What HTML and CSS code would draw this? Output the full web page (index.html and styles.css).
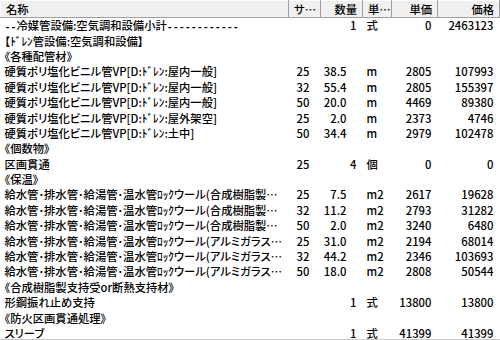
FILE: index.html
```html
<!DOCTYPE html>
<html lang="ja">
<head>
<meta charset="utf-8">
<title>明細一覧</title>
<link rel="stylesheet" href="styles.css">
</head>
<body>
<div class="listview">
<table class="grid">
<colgroup>
<col class="c-name"><col class="c-size"><col class="c-qty"><col class="c-unit"><col class="c-price"><col class="c-amount">
</colgroup>
<thead>
<tr>
<th class="h-left">名称</th>
<th class="h-left">サ…</th>
<th class="h-right">数量</th>
<th class="h-left">単…</th>
<th class="h-right">単価</th>
<th class="h-right">価格</th>
</tr>
</thead>
<tbody>
<tr><td class="name"><span class="rule">--</span>冷媒管設備:空気調和設備小計<span class="rule">------------</span></td><td></td><td class="num">1</td><td class="unit">式</td><td class="num">0</td><td class="num">2463123</td></tr>
<tr><td class="name">【ﾄﾞﾚﾝ管設備:空気調和設備】</td><td></td><td></td><td></td><td></td><td></td></tr>
<tr><td class="name">《各種配管材》</td><td></td><td></td><td></td><td></td><td></td></tr>
<tr><td class="name">硬質ポリ塩化ビニル管VP[D:ﾄﾞﾚﾝ:屋内一般]</td><td class="size">25</td><td class="num dec">38.5</td><td class="unit">m</td><td class="num">2805</td><td class="num">107993</td></tr>
<tr><td class="name">硬質ポリ塩化ビニル管VP[D:ﾄﾞﾚﾝ:屋内一般]</td><td class="size">32</td><td class="num dec">55.4</td><td class="unit">m</td><td class="num">2805</td><td class="num">155397</td></tr>
<tr><td class="name">硬質ポリ塩化ビニル管VP[D:ﾄﾞﾚﾝ:屋内一般]</td><td class="size">50</td><td class="num dec">20.0</td><td class="unit">m</td><td class="num">4469</td><td class="num">89380</td></tr>
<tr><td class="name">硬質ポリ塩化ビニル管VP[D:ﾄﾞﾚﾝ:屋外架空]</td><td class="size">25</td><td class="num dec">2.0</td><td class="unit">m</td><td class="num">2373</td><td class="num">4746</td></tr>
<tr><td class="name">硬質ポリ塩化ビニル管VP[D:ﾄﾞﾚﾝ:土中]</td><td class="size">50</td><td class="num dec">34.4</td><td class="unit">m</td><td class="num">2979</td><td class="num">102478</td></tr>
<tr><td class="name">《個数物》</td><td></td><td></td><td></td><td></td><td></td></tr>
<tr><td class="name">区画貫通</td><td class="size">25</td><td class="num">4</td><td class="unit">個</td><td class="num">0</td><td class="num">0</td></tr>
<tr><td class="name">《保温》</td><td></td><td></td><td></td><td></td><td></td></tr>
<tr><td class="name">給水管･排水管･給湯管･温水管ﾛｯｸウール(合成樹脂製…</td><td class="size">25</td><td class="num dec">7.5</td><td class="unit">m2</td><td class="num">2617</td><td class="num">19628</td></tr>
<tr><td class="name">給水管･排水管･給湯管･温水管ﾛｯｸウール(合成樹脂製…</td><td class="size">32</td><td class="num dec">11.2</td><td class="unit">m2</td><td class="num">2793</td><td class="num">31282</td></tr>
<tr><td class="name">給水管･排水管･給湯管･温水管ﾛｯｸウール(合成樹脂製…</td><td class="size">50</td><td class="num dec">2.0</td><td class="unit">m2</td><td class="num">3240</td><td class="num">6480</td></tr>
<tr><td class="name">給水管･排水管･給湯管･温水管ﾛｯｸウール(アルミガラス…</td><td class="size">25</td><td class="num dec">31.0</td><td class="unit">m2</td><td class="num">2194</td><td class="num">68014</td></tr>
<tr><td class="name">給水管･排水管･給湯管･温水管ﾛｯｸウール(アルミガラス…</td><td class="size">32</td><td class="num dec">44.2</td><td class="unit">m2</td><td class="num">2346</td><td class="num">103693</td></tr>
<tr><td class="name">給水管･排水管･給湯管･温水管ﾛｯｸウール(アルミガラス…</td><td class="size">50</td><td class="num dec">18.0</td><td class="unit">m2</td><td class="num">2808</td><td class="num">50544</td></tr>
<tr><td class="name">《合成樹脂製支持受or断熱支持材》</td><td></td><td></td><td></td><td></td><td></td></tr>
<tr><td class="name">形鋼振れ止め支持</td><td></td><td class="num">1</td><td class="unit">式</td><td class="num">13800</td><td class="num">13800</td></tr>
<tr><td class="name">《防火区画貫通処理》</td><td></td><td></td><td></td><td></td><td></td></tr>
<tr><td class="name">スリーブ</td><td></td><td class="num">1</td><td class="unit">式</td><td class="num">41399</td><td class="num">41399</td></tr>
</tbody>
</table>
</div>
</body>
</html>
```

FILE: styles.css
```css
html, body {
  margin: 0;
  padding: 0;
  background: #ffffff;
}

body {
  width: 500px;
  height: 340px;
  overflow: hidden;
  font-family: "Noto Sans CJK JP", "Noto Sans", sans-serif;
  font-size: 11.3px;
  font-weight: 500;
  color: #000000;
  font-feature-settings: "palt";
}

.listview {
  width: 500px;
  height: 340px;
  overflow: hidden;
  box-sizing: border-box;
  border-bottom: 1px solid #c8c8c8;
}

.grid {
  border-collapse: collapse;
  table-layout: fixed;
  width: 499px;
}

.c-name { width: 288px; }
.c-size { width: 32px; }
.c-qty { width: 42px; }
.c-unit { width: 29px; }
.c-price { width: 46px; }
.c-amount { width: 62px; }

.grid th {
  height: 17px;
  box-sizing: border-box;
  padding: 0 5px;
  font-weight: 500;
  background: #f0f0f0;
  border-top: 1px solid #ffffff;
  border-left: 1px solid #ffffff;
  border-right: 1px solid #a0a0a0;
  border-bottom: 1px solid #a0a0a0;
  white-space: nowrap;
  overflow: hidden;
  line-height: 15px;
}

.h-left { text-align: left; }
.h-right { text-align: right; }

.grid td {
  height: 15.4px;
  padding: 0;
  line-height: 15px;
  white-space: nowrap;
  overflow: hidden;
}

.name {
  padding-left: 4px !important;
  padding-right: 4px !important;
  text-overflow: clip;
}

.rule {
  font-family: "Liberation Mono", "DejaVu Sans Mono", monospace;
  font-size: 10px;
  line-height: 8px;
  font-weight: bold;
  letter-spacing: 0;
}

.size {
  padding-left: 8px !important;
}

.num {
  text-align: right;
  padding-right: 6px !important;
}

.num.dec {
  padding-right: 16px !important;
}

.unit {
  padding-left: 4px !important;
}
```
